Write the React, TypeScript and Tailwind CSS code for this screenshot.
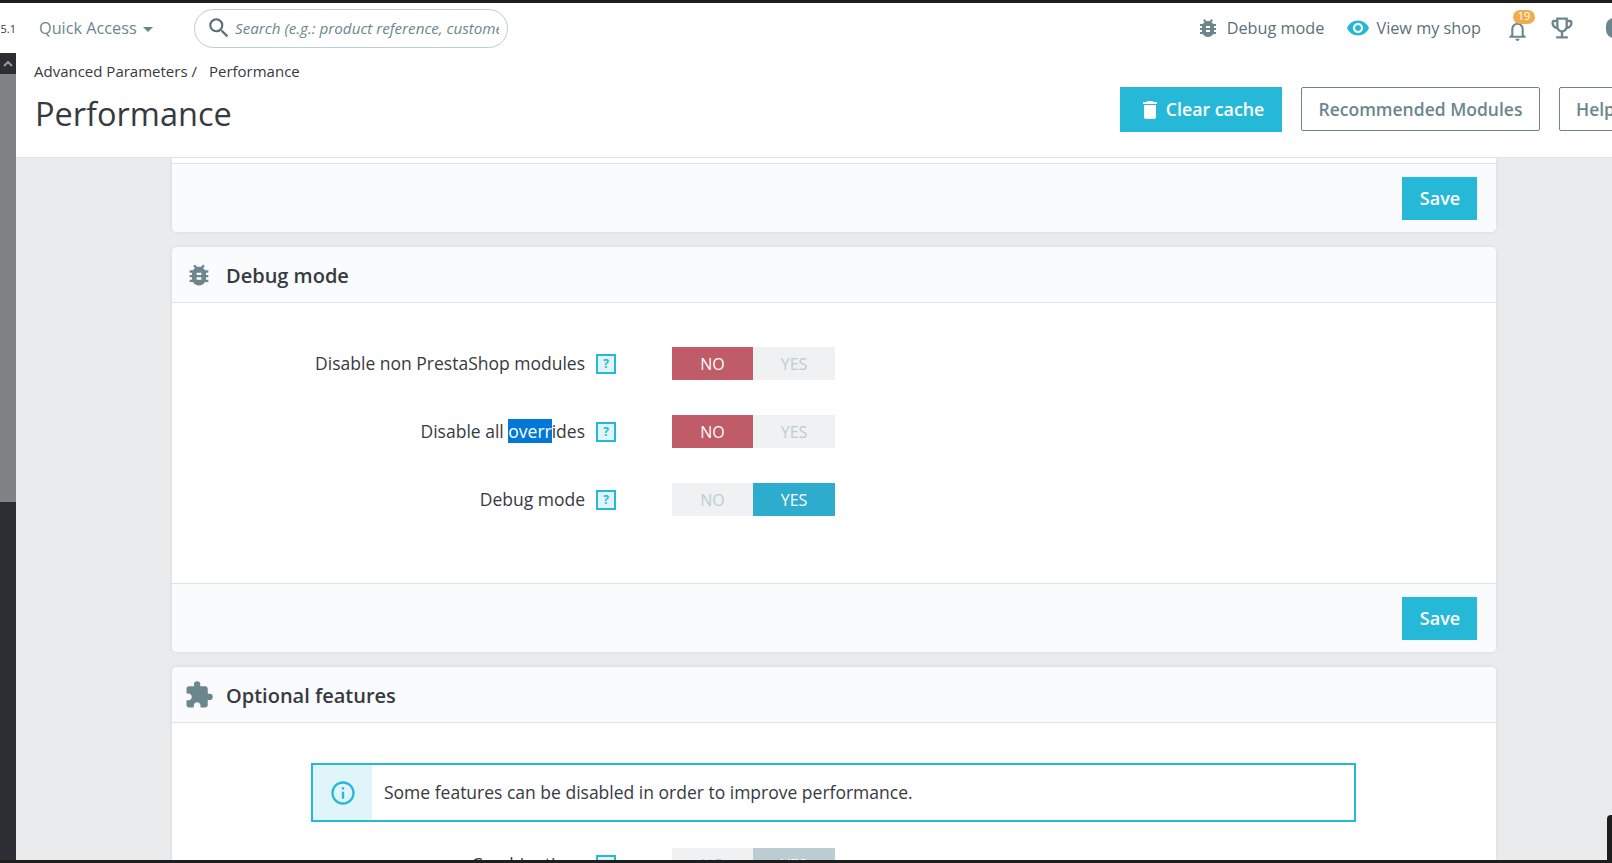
import {
  MdBugReport,
  MdDelete,
  MdExtension,
  MdInfoOutline,
  MdNotificationsNone,
  MdOutlineEmojiEvents,
  MdSearch,
  MdVisibility,
} from "react-icons/md";

const SaveButton = () => (
  <button className="flex h-[43px] w-[75px] items-center justify-center bg-[#25b9d7] pl-[1px] text-[18px] font-semibold text-white">
    Save
  </button>
);

const HelpBox = () => (
  <span className="ml-[11px] flex h-[20px] w-[20px] items-center justify-center border-2 border-[#25b9d7] bg-[#dff5f9] text-[12px] font-bold text-[#25b9d7]">
    ?
  </span>
);

const Toggle = ({ value, disabled }: { value: "no" | "yes"; disabled?: boolean }) => (
  <div className="flex h-[33px] w-[163px] bg-[#eff1f2] text-[16px] text-[#bbcdd2]">
    <span
      className={
        value === "no"
          ? "flex w-[81px] items-center justify-center bg-[#c05c67] text-white"
          : "flex w-[81px] items-center justify-center"
      }
    >
      NO
    </span>
    <span
      className={
        value === "yes"
          ? disabled
            ? "flex w-[82px] items-center justify-center bg-[#bbcdd2] text-white"
            : "flex w-[82px] items-center justify-center bg-[#2eacce] text-white"
          : "flex w-[82px] items-center justify-center"
      }
    >
      YES
    </span>
  </div>
);

const Row = ({
  label,
  value,
  disabled,
}: {
  label: React.ReactNode;
  value: "no" | "yes";
  disabled?: boolean;
}) => (
  <div className="flex h-[33px] items-center">
    <div className="w-[413px] text-right text-[17.5px] whitespace-nowrap text-[#363a41]">{label}</div>
    <HelpBox />
    <div className="ml-[56px]">
      <Toggle value={value} disabled={disabled} />
    </div>
  </div>
);

const CardHeader = ({ icon, title }: { icon: React.ReactNode; title: string }) => (
  <div className="flex h-[56px] items-center rounded-t-[5px] border-b border-[#dbe6e9] bg-[#fafbfc]">
    <div className="flex w-[54px] shrink-0 items-center justify-center text-[#6c868e]">{icon}</div>
    <h2 className="mt-[2px] text-[20px] font-semibold text-[#363a41]">{title}</h2>
  </div>
);

const CardFooter = () => (
  <div className="flex h-[69px] items-center justify-end rounded-b-[5px] border-t border-[#dbe6e9] bg-[#fafbfc] pr-[19px]">
    <SaveButton />
  </div>
);

export default function App() {
  return (
    <div
      className="relative flex h-[863px] w-[1612px] flex-col overflow-hidden bg-[#eaebec]"
      style={{ fontFamily: '"Open Sans", sans-serif' }}
    >
      <div className="h-[3px] shrink-0 bg-[#1e1e1e]" />

      {/* Top nav */}
      <header className="flex h-[50px] shrink-0 items-center bg-white">
        <div className="w-[16px] shrink-0 overflow-hidden pt-[3px] text-right text-[11px] text-[#363a41]">5.1</div>
        <div className="ml-[23px] flex w-[155px] shrink-0 items-center text-[16.25px] text-[#6c868e]">
          Quick Access
          <span className="ml-[6px] mt-[3px] h-0 w-0 border-x-[5px] border-t-[5px] border-x-transparent border-t-[#6c868e]" />
        </div>
        <div className="flex h-[39px] w-[314px] shrink-0 items-center overflow-hidden rounded-full border border-[#bbcdd2] pl-[11px] pr-[8px]">
          <MdSearch className="shrink-0 text-[#5b7079]" size={26} />
          <span className="ml-[3px] overflow-hidden text-[15.2px] whitespace-nowrap text-[#6c868e] italic">
            Search (e.g.: product reference, customer name…)
          </span>
        </div>
        <div className="ml-auto flex shrink-0 items-center text-[16.25px] text-[#5b7079]">
          <MdBugReport className="text-[#6c868e]" size={24} />
          <span className="ml-[7px]">Debug mode</span>
          <MdVisibility className="ml-[22px] text-[#25b9d7]" size={24} />
          <span className="ml-[6px]">View my shop</span>
          <div className="relative ml-[24px] pt-[4px] text-[#6c868e]">
            <MdNotificationsNone size={25} />
            <span className="absolute -top-[4px] left-[8px] flex h-[14px] w-[22px] items-center justify-center rounded-full bg-[#f0ad4e] text-[11px] text-white">
              19
            </span>
          </div>
          <MdOutlineEmojiEvents className="ml-[18px] text-[#6c868e]" size={28} />
          <span className="ml-[30px] -mr-[10px] h-[20px] w-[16px] rounded-full bg-[#6c868e]" />
        </div>
      </header>

      <div className="flex min-h-0 flex-1">
        {/* Sidebar strip */}
        <aside className="flex w-[16px] shrink-0 flex-col bg-[#2c2e34]">
          <div className="flex h-[21px] items-center justify-center text-[#9a9b9e]">
            <svg width="10" height="6" viewBox="0 0 10 6">
              <path d="M1 5l4-4 4 4" fill="none" stroke="currentColor" strokeWidth="2" />
            </svg>
          </div>
          <div className="h-[428px] bg-[#808285]" />
        </aside>

        <main className="flex min-w-0 flex-1 flex-col">
          {/* Page head */}
          <div className="flex h-[105px] shrink-0 border-b border-[#dfe3e5] bg-white pl-[18px]">
            <div className="w-[1086px] shrink-0 pt-[7px]">
              <div className="text-[15px] text-[#363a41]">
                Advanced Parameters /<span className="ml-[12px]">Performance</span>
              </div>
              <h1 className="mt-[9px] ml-[1px] text-[32.5px] leading-[44px] text-[#363a41]">Performance</h1>
            </div>
            <div className="flex shrink-0 items-start pt-[34px]">
              <button className="flex h-[45px] w-[162px] items-center justify-center bg-[#25b9d7] text-[17.75px] font-semibold text-white">
                <MdDelete size={24} />
                <span className="ml-[4px]">Clear cache</span>
              </button>
              <button className="ml-[19px] h-[44px] w-[239px] rounded-[2px] border border-[#6c868e] text-[17.5px] font-semibold text-[#6c868e]">
                Recommended Modules
              </button>
              <button className="ml-[19px] h-[44px] w-[100px] shrink-0 rounded-[2px] border border-[#6c868e] pl-[16px] text-left text-[17.5px] font-semibold text-[#6c868e]">
                Help
              </button>
            </div>
          </div>

          {/* Cards */}
          <div className="flex min-h-0 flex-1 flex-col gap-[15px] overflow-hidden pl-[156px]">
            <section className="w-[1324px] shrink-0 rounded-b-[5px] bg-white shadow-[0_0_4px_rgba(0,0,0,0.08)]">
              <div className="h-[5px]" />
              <CardFooter />
            </section>

            <section className="w-[1324px] shrink-0 rounded-[5px] bg-white shadow-[0_0_4px_rgba(0,0,0,0.08)]">
              <CardHeader icon={<MdBugReport size={28} />} title="Debug mode" />
              <div className="flex h-[280px] flex-col gap-[35px] pt-[44px]">
                <Row label="Disable non PrestaShop modules" value="no" />
                <Row
                  label={
                    <>
                      Disable all <span className="bg-[#0078d7] text-white">overr</span>ides
                    </>
                  }
                  value="no"
                />
                <Row label="Debug mode" value="yes" />
              </div>
              <CardFooter />
            </section>

            <section className="w-[1324px] shrink-0 rounded-t-[5px] bg-white shadow-[0_0_4px_rgba(0,0,0,0.08)]">
              <CardHeader icon={<MdExtension size={30} />} title="Optional features" />
              <div className="pl-[139px] pt-[40px]">
                <div className="flex h-[59px] w-[1045px] items-center border-2 border-[#25b9d7]">
                  <div className="flex h-full w-[59px] items-center justify-center bg-[#dff5f9] text-[#25b9d7]">
                    <MdInfoOutline size={28} />
                  </div>
                  <p className="ml-[12px] text-[17.5px] text-[#363a41]">
                    Some features can be disabled in order to improve performance.
                  </p>
                </div>
              </div>
              <div className="mt-[26px]">
                <Row label="Combinations" value="yes" disabled />
              </div>
            </section>
          </div>
        </main>
      </div>

      <div className="h-[3px] shrink-0 bg-[#1e1e1e]" />
      {/* window corner sitting over the page */}
      <div className="absolute right-0 bottom-[3px] h-[45px] w-[5px] rounded-tl-[4px] bg-[#1e1e1e]" />
    </div>
  );
}
